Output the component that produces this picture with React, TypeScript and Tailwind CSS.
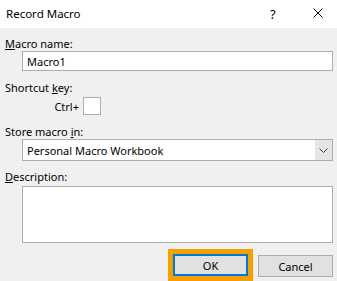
import React from "react";

export default function App() {
  const font = { fontFamily: '"Segoe UI", "Noto Sans", "Open Sans", sans-serif' };
  return (
    <div className="w-[337px] h-[281px] overflow-hidden bg-[#f0f0f0] text-black text-[11px]" style={font}>
      <div className="h-[28px] bg-white flex items-center pl-[6px] relative">
        <span className="text-[11.5px] leading-none">Record Macro</span>
        <span className="absolute left-[270px] top-[6px] text-[13px] leading-[16px]">?</span>
        <svg className="absolute left-[313px] top-[8px]" width="10" height="10" viewBox="0 0 10 10">
          <path d="M0.5 0.5 L9.5 9.5 M9.5 0.5 L0.5 9.5" stroke="#000" strokeWidth="1" fill="none" />
        </svg>
      </div>
      <div className="pl-[5px] pr-[4px] flex flex-col">
        <div className="mt-[8px] h-[15px] leading-[15px]"><span className="underline">M</span>acro name:</div>
        <div className="ml-[17px] h-[20px] bg-white border border-[#adadad] flex items-center pl-[4px] leading-none">Macro1</div>
        <div className="mt-[9px] h-[15px] leading-[15px]">Shortcut <span className="underline">k</span>ey:</div>
        <div className="mt-[2px] flex items-center h-[18px]">
          <span className="w-[78px] pr-[4px] text-right leading-none">Ctrl+</span>
          <div className="w-[18px] h-[18px] bg-white border border-[#adadad]" />
        </div>
        <div className="mt-[9px] h-[15px] leading-[15px]">Store macro <span className="underline">i</span>n:</div>
        <div className="ml-[17px] h-[22px] bg-white border border-[#adadad] flex items-stretch">
          <div className="flex-1 flex items-center pl-[4px] leading-none">Personal Macro Workbook</div>
          <div className="w-[17px] bg-[#e5e5e5] flex items-center justify-center">
            <svg width="9" height="5" viewBox="0 0 9 5">
              <path d="M0.5 0.5 L4.5 4.5 L8.5 0.5" stroke="#404040" strokeWidth="1" fill="none" />
            </svg>
          </div>
        </div>
        <div className="mt-[8px] h-[15px] leading-[15px]"><span className="underline">D</span>escription:</div>
        <div className="ml-[17px] mt-[2px] h-[57px] bg-white border border-[#adadad]" />
        <div className="mt-[6px] flex justify-end items-start">
          <div className="border-[5px] border-[#f5a000] flex">
            <button className="w-[75px] h-[22px] bg-[#e1e1e1] border-2 border-[#0078d7] leading-none text-[11px]" style={font}>OK</button>
          </div>
          <button className="ml-[5px] mt-[6px] w-[75px] h-[22px] bg-[#e1e1e1] border border-[#adadad] leading-none text-[11px]" style={font}>Cancel</button>
        </div>
      </div>
    </div>
  );
}
